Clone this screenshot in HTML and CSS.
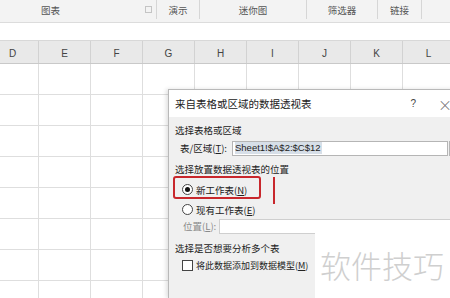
FILE: index.html
```html
<!DOCTYPE html>
<html lang="zh-CN">
<head>
    <meta charset="UTF-8">
    <title>数据透视表</title>
    <link rel="stylesheet" href="styles.css">
</head>
<body>

<!-- Ribbon group labels -->
<div class="ribbon">
    <div class="group g-chart">图表<span class="launcher"></span></div>
    <div class="group g-demo">演示</div>
    <div class="group g-spark">迷你图</div>
    <div class="group g-filter">筛选器</div>
    <div class="group g-link">链接</div>
    <div class="group g-rest"></div>
</div>

<!-- Formula bar -->
<div class="formula-bar"></div>

<!-- Sheet -->
<div class="sheet">
    <div class="col-head">
        <div class="col">D</div>
        <div class="col">E</div>
        <div class="col">F</div>
        <div class="col">G</div>
        <div class="col">H</div>
        <div class="col">I</div>
        <div class="col">J</div>
        <div class="col">K</div>
        <div class="col">L</div>
    </div>
    <div class="cells"></div>
</div>

<!-- Dialog -->
<div class="dialog">
    <div class="dialog-title">
        <span>来自表格或区域的数据透视表</span>
        <span class="help">?</span>
        <span class="close">×</span>
    </div>
    <div class="dialog-body">
        <div class="section">选择表格或区域</div>
        <div class="field-row">
            <span class="field-label">表/区域(<u>T</u>):</span>
            <div class="input range-input"><span class="selected">Sheet1!$A$2:$C$12</span></div>
            <div class="range-btn"></div>
        </div>

        <div class="section">选择放置数据透视表的位置</div>
        <div class="option first">
            <span class="radio checked"></span>
            <span>新工作表(<u>N</u>)</span>
        </div>
        <div class="option">
            <span class="radio"></span>
            <span>现有工作表(<u>E</u>)</span>
        </div>
        <div class="field-row pos-row">
            <span class="field-label disabled">位置(<u>L</u>):</span>
            <div class="input pos-input"></div>
        </div>

        <div class="section third">选择是否想要分析多个表</div>
        <div class="option check-row">
            <span class="checkbox"></span>
            <span>将此数据添加到数据模型(<u>M</u>)</span>
        </div>
    </div>

    <!-- annotation marks -->
    <div class="mark-box"></div>
    <div class="mark-line"></div>
</div>

<div class="watermark">软件技巧</div>

</body>
</html>
```

FILE: styles.css
```css
body {
    margin: 0;
    width: 450px;
    height: 298px;
    overflow: hidden;
    position: relative;
    background-color: #fff;
    font-family: "Noto Sans CJK SC", "Noto Sans", sans-serif;
    color: #222;
}
.ribbon {
    display: flex;
    height: 22px;
    background-color: #f3f3f3;
    border-bottom: 1px solid #dcdcdc;
    font-size: 9.5px;
    color: #555;
}
.group {
    position: relative;
    display: flex;
    justify-content: center;
    align-items: flex-start;
    padding-top: 3px;
    box-sizing: border-box;
    border-right: 1px solid #d6d6d6;
    height: 19px;
}
.g-chart {
    width: 212px;
    margin-left: -55px;
}
.g-demo { width: 43px; }
.g-spark { width: 107px; }
.g-filter { width: 71px; }
.g-link { width: 44px; }
.g-rest {
    flex: 1;
    border-right: none;
}
.launcher {
    position: absolute;
    right: 4px;
    top: 6px;
    width: 5px;
    height: 5px;
    border: 1px solid #c4c4c4;
}
.formula-bar {
    height: 17px;
    background-color: #fff;
}
.sheet {
    margin-left: -13px;
}
.col-head {
    display: flex;
    height: 22px;
    background-color: #e9e9e9;
    border-top: 1px solid #d8d8d8;
    border-bottom: 1px solid #c9c9c9;
}
.col {
    width: 52px;
    flex-shrink: 0;
    box-sizing: border-box;
    border-right: 1px solid #d2d2d2;
    text-align: center;
    font-family: "Liberation Sans", Arial, sans-serif;
    font-size: 10px;
    color: #444;
    padding-top: 7px;
}
.cells {
    height: 234px;
    background-image:
        linear-gradient(to right, #dedede 1px, transparent 1px),
        linear-gradient(to bottom, #dedede 1px, transparent 1px);
    background-size: 52px 31px;
    background-position: 51px 30px;
}

/* dialog */
.dialog {
    position: absolute;
    left: 168px;
    top: 89px;
    width: 300px;
    height: 208px;
    background-color: #f0f0f0;
    border: 1px solid #b9b9b9;
    border-bottom: none;
    box-shadow: -2px 0 4px rgba(0, 0, 0, 0.12);
    font-size: 9.5px;
}
.dialog-title {
    display: flex;
    align-items: center;
    height: 27px;
    padding-left: 6px;
    background-color: #fff;
    font-size: 10.5px;
    color: #222;
}
.help {
    margin-left: 99px;
    font-family: "Liberation Sans", Arial, sans-serif;
    font-size: 10px;
    color: #444;
}
.close {
    margin-left: 22px;
    font-size: 14px;
    font-weight: 300;
    color: #666;
}
.dialog-body {
    padding-left: 6px;
}
.section {
    height: 16px;
    line-height: 16px;
    margin-top: 5px;
}
.field-row {
    display: flex;
    align-items: center;
    height: 16px;
    margin-top: 2px;
}
.field-label {
    width: 52px;
    padding-left: 5px;
}
.field-label.disabled {
    color: #8a8a8a;
    width: 36px;
    padding-left: 8px;
}
.input {
    height: 13px;
    background-color: #fff;
    border: 1px solid #b5b5b5;
    box-sizing: content-box;
}
.range-input {
    width: 212px;
    display: flex;
    align-items: center;
    padding-left: 2px;
}
.selected {
    background-color: #d7dfe8;
    font-family: "Liberation Sans", Arial, sans-serif;
    font-size: 9.5px;
    line-height: 12px;
    padding-right: 1px;
}
.range-btn {
    width: 10px;
    height: 13px;
    margin-left: 1px;
    border: 1px solid #b5b5b5;
    background-color: #fafafa;
}
.option {
    display: flex;
    align-items: center;
    gap: 3px;
    height: 17px;
    margin-top: 3px;
    padding-left: 7px;
}
.option.first {
    margin-top: 4px;
}
.radio {
    width: 9px;
    height: 9px;
    border: 1px solid #444;
    border-radius: 50%;
    display: flex;
    justify-content: center;
    align-items: center;
    background-color: #fff;
}
.radio.checked::after {
    content: "";
    width: 5px;
    height: 5px;
    border-radius: 50%;
    background-color: #111;
}
.pos-row {
    margin-top: 0;
}
.pos-input {
    width: 232px;
    border-color: #cfcfcf;
}
.section.third {
    margin-top: 6px;
}
.check-row {
    margin-top: 1px;
    font-size: 9px;
}
.checkbox {
    width: 9px;
    height: 9px;
    border: 1px solid #444;
    background-color: #fff;
}

/* red annotation */
.mark-box {
    position: absolute;
    left: 4px;
    top: 86px;
    width: 84px;
    height: 19px;
    border: 2px solid #c8272c;
    border-radius: 3px;
}
.mark-line {
    position: absolute;
    left: 104px;
    top: 87px;
    width: 2px;
    height: 27px;
    background-color: #c8272c;
}

.watermark {
    position: absolute;
    left: 315px;
    top: 231px;
    width: 135px;
    height: 67px;
    background-color: #fff;
    font-size: 31px;
    font-weight: 300;
    color: #cfcfcf;
    line-height: 67px;
    padding-left: 5px;
    box-sizing: border-box;
}
```
